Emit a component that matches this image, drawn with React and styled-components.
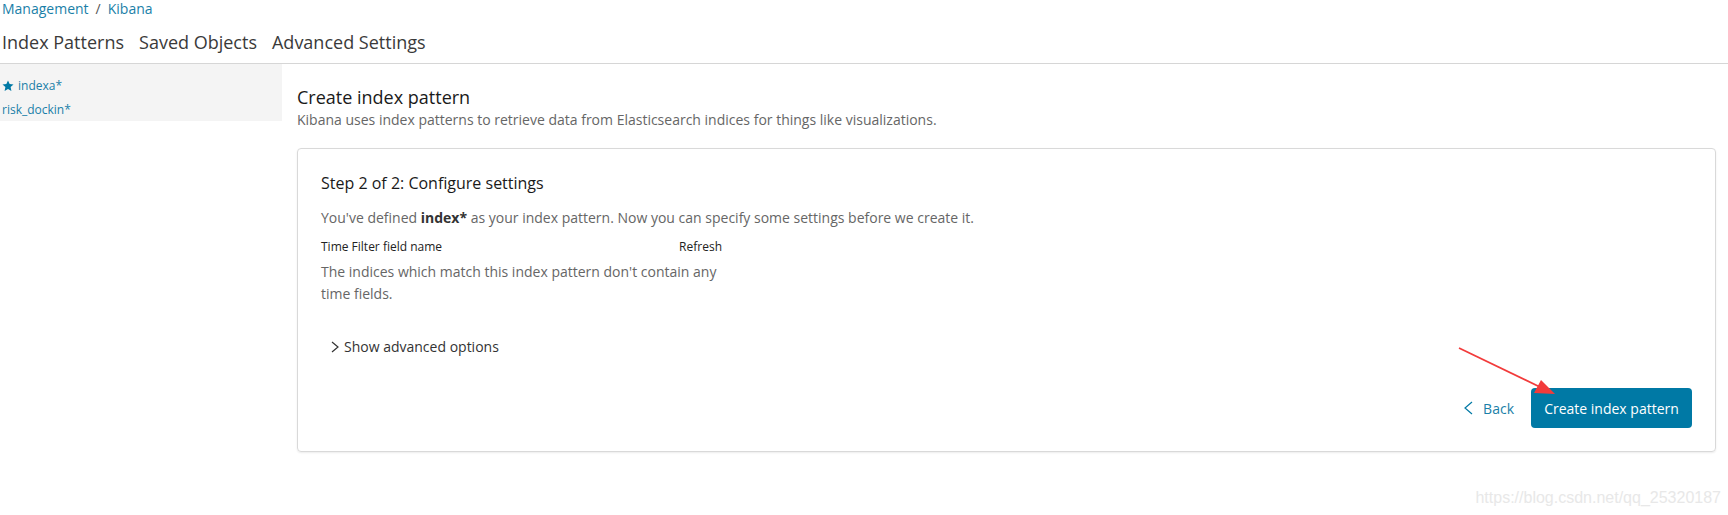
import React from 'react'
import styled, { createGlobalStyle } from 'styled-components'

const GlobalStyle = createGlobalStyle`
    body {
        margin: 0;
        background: #fff;
        font-family: "Open Sans", "Noto Sans", sans-serif;
        color: #333;
    }
`

const Star = () => (
    <svg width="12" height="12" viewBox="0 0 24 24">
        <path fill="#0079a5" d="M12 1l3.3 7.1 7.7.9-5.8 5.2 1.6 7.8L12 18l-6.8 4 1.6-7.8L1 9l7.7-.9z" />
    </svg>
)

const Chevron = ({ dir = 'right', color = '#333', h = 12 }) => (
    <svg width={h / 2 + 2} height={h} viewBox={`0 0 ${h / 2 + 2} ${h}`}>
        <polyline
            fill="none"
            stroke={color}
            strokeWidth="1.2"
            points={dir === 'right'
                ? `1,1 ${h / 2 + 1},${h / 2} 1,${h - 1}`
                : `${h / 2 + 1},1 1,${h / 2} ${h / 2 + 1},${h - 1}`}
        />
    </svg>
)

const App = () => {
    return (
        <Page>
            <GlobalStyle />
            <Header>
                <Breadcrumbs>
                    <Crumb>Management</Crumb>
                    <Sep>/</Sep>
                    <Crumb>Kibana</Crumb>
                </Breadcrumbs>
                <Tabs>
                    <Tab>Index Patterns</Tab>
                    <Tab>Saved Objects</Tab>
                    <Tab>Advanced Settings</Tab>
                </Tabs>
            </Header>
            <Body>
                <Sidebar>
                    <SideItem><Star /> indexa*</SideItem>
                    <SideItem>risk_dockin*</SideItem>
                </Sidebar>
                <Main>
                    <Title>Create index pattern</Title>
                    <Subtitle>Kibana uses index patterns to retrieve data from Elasticsearch indices for things like visualizations.</Subtitle>
                    <Panel>
                        <StepTitle>Step 2 of 2: Configure settings</StepTitle>
                        <Description>
                            You've defined <b>index*</b> as your index pattern. Now you can specify some settings before we create it.
                        </Description>
                        <FieldBlock>
                            <FieldLabels>
                                <span>Time Filter field name</span>
                                <span>Refresh</span>
                            </FieldLabels>
                            <FieldHelp>The indices which match this index pattern don't contain any time fields.</FieldHelp>
                        </FieldBlock>
                        <Advanced>
                            <Chevron dir="right" color="#333" h={12} />
                            Show advanced options
                        </Advanced>
                        <Footer>
                            <BackLink>
                                <Chevron dir="left" color="#0079a5" h={14} />
                                Back
                            </BackLink>
                            <PrimaryButton>Create index pattern</PrimaryButton>
                        </Footer>
                    </Panel>
                </Main>
            </Body>
            <Arrow width="1728" height="515">
                <line x1="1459" y1="348" x2="1540" y2="387" stroke="#f23b3b" strokeWidth="1.8" />
                <polygon points="1555,394 1541,380 1534,393" fill="#f23b3b" />
            </Arrow>
            <Watermark>https://blog.csdn.net/qq_25320187</Watermark>
        </Page>
    )
}

export default App

const Page = styled.div`
    position: relative;
    width: 1728px;
    height: 515px;
    overflow: hidden;
`

const Header = styled.div`
    border-bottom: 1px solid #d6d6d6;
    padding-left: 2px;
    height: 63px;
`

const Breadcrumbs = styled.div`
    display: flex;
    gap: 7px;
    font-size: 14px;
    line-height: 18px;
`

const Crumb = styled.span`
    color: #1a7fa8;
`

const Sep = styled.span`
    color: #555;
`

const Tabs = styled.div`
    display: flex;
    gap: 15px;
    margin-top: 12px;
    font-size: 18px;
    line-height: 24px;
`

const Tab = styled.div`
    color: #3a3a3a;
`

const Body = styled.div`
    display: flex;
    align-items: flex-start;
`

const Sidebar = styled.div`
    width: 282px;
    height: 57px;
    padding-top: 10px;
    box-sizing: border-box;
    background: #f4f4f4;
`

const SideItem = styled.div`
    display: flex;
    align-items: center;
    gap: 4px;
    padding-left: 2px;
    font-size: 12px;
    line-height: 24px;
    color: #1a7fa8;
`

const Main = styled.div`
    margin-left: 15px;
    width: 1419px;
    padding-top: 21px;
`

const Title = styled.div`
    font-size: 18px;
    line-height: 24px;
    color: #1a1a1a;
`

const Subtitle = styled.div`
    margin-top: 1px;
    font-size: 14px;
    line-height: 20px;
    color: #666;
`

const Panel = styled.div`
    margin-top: 18px;
    height: 304px;
    box-sizing: border-box;
    border: 1px solid #d9d9d9;
    border-radius: 4px;
    box-shadow: 0 1px 2px rgba(0, 0, 0, 0.08);
    padding: 23px;
    display: flex;
    flex-direction: column;
`

const StepTitle = styled.div`
    font-size: 16px;
    line-height: 22px;
    color: #1a1a1a;
`

const Description = styled.div`
    margin-top: 14px;
    font-size: 14px;
    line-height: 20px;
    color: #666;

    b {
        color: #333;
        font-weight: 700;
    }
`

const FieldBlock = styled.div`
    width: 401px;
    margin-top: 11px;
`

const FieldLabels = styled.div`
    display: flex;
    justify-content: space-between;
    font-size: 12px;
    line-height: 16px;
    color: #222;
`

const FieldHelp = styled.div`
    margin-top: 6px;
    font-size: 14px;
    line-height: 22px;
    color: #666;
`

const Advanced = styled.div`
    margin-top: 32px;
    display: flex;
    align-items: center;
    gap: 5px;
    padding-left: 10px;
    font-size: 14px;
    line-height: 20px;
    color: #333;
`

const Footer = styled.div`
    margin-top: 31px;
    display: flex;
    justify-content: flex-end;
    align-items: center;
    gap: 17px;
`

const BackLink = styled.div`
    display: flex;
    align-items: center;
    gap: 10px;
    font-size: 14px;
    color: #1a7fa8;
`

const PrimaryButton = styled.button`
    height: 40px;
    width: 161px;
    border: none;
    border-radius: 4px;
    background: #0079a5;
    color: #fff;
    font-family: "Open Sans", sans-serif;
    font-size: 14px;
    padding: 0;
`

const Arrow = styled.svg`
    position: absolute;
    left: 0;
    top: 0;
    pointer-events: none;
`

const Watermark = styled.div`
    position: absolute;
    right: 7px;
    top: 488px;
    font-family: "Liberation Sans", Arial, sans-serif;
    font-size: 16px;
    line-height: 20px;
    color: #e8e8e8;
`
